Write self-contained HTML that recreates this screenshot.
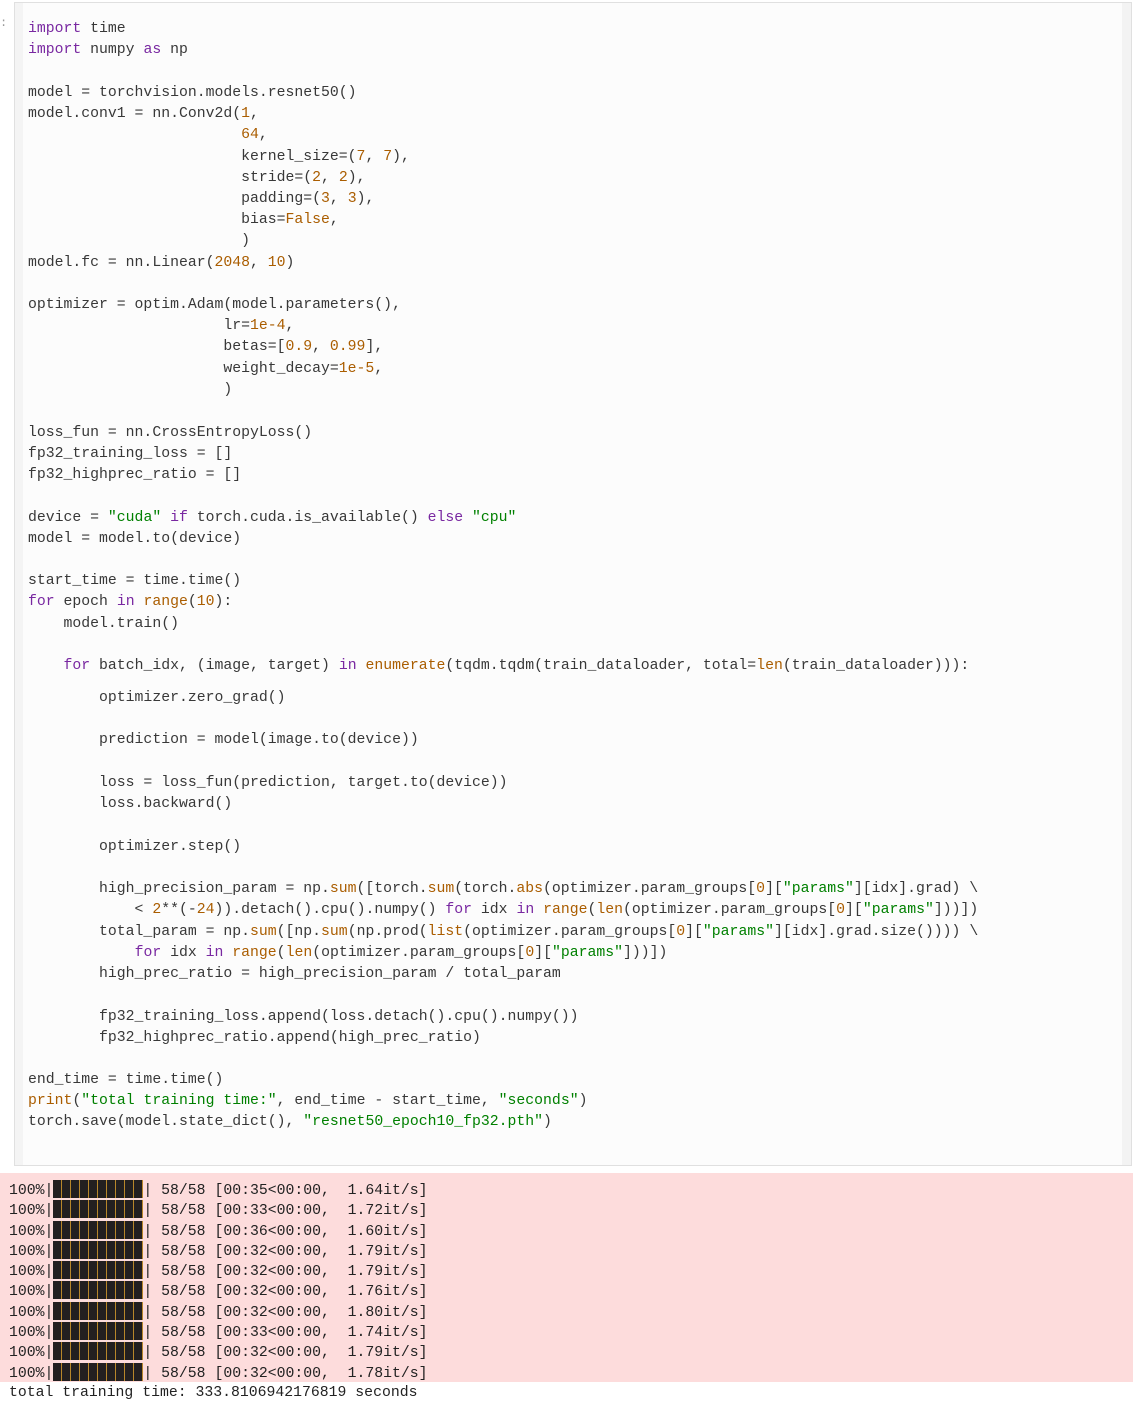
<!DOCTYPE html>
<html><head><meta charset="utf-8"><style>
body{margin:0;width:1133px;height:1410px;background:#fff;position:relative;overflow:hidden;font-family:"Liberation Mono",monospace;font-size:14.8px;color:#383838}
.cell{position:absolute;left:14px;top:2px;width:1116px;height:1162px;border:1px solid #e0e0e0;background:#fcfcfc}
.lb{position:absolute;left:0;top:0;width:8px;height:100%;background:#f4f4f4}
.rb{position:absolute;right:0;top:0;width:9px;height:100%;background:#f3f3f3}
.l{position:absolute;left:28px;white-space:pre;line-height:21px;height:21px;margin-top:2px}
.k{color:#7928a1}.n{color:#aa5d00}.s{color:#008000}
.out{position:absolute;left:0;top:1173px;width:1133px;height:209px;background:#fddcdc}
.o{position:absolute;left:9px;white-space:pre;line-height:20px;color:#222;margin-top:1px}
.bar{display:inline-block;width:90px;height:18px;vertical-align:-4px;background:#231f20 repeating-linear-gradient(90deg,transparent 0 8px,#b8862a 8px 9px);}
</style></head><body>
<div style="position:absolute;left:0;top:16px;color:#999;font-size:12px">:</div>
<div class="cell"><div class="lb"></div><div class="rb"></div></div>
<div class="l" style="top:17px"><span class="k">import</span> time</div>
<div class="l" style="top:38px"><span class="k">import</span> numpy <span class="k">as</span> np</div>
<div class="l" style="top:81px">model = torchvision.models.resnet50()</div>
<div class="l" style="top:102px">model.conv1 = nn.Conv2d(<span class="n">1</span>,</div>
<div class="l" style="top:123px">                        <span class="n">64</span>,</div>
<div class="l" style="top:145px">                        kernel_size=(<span class="n">7</span>, <span class="n">7</span>),</div>
<div class="l" style="top:166px">                        stride=(<span class="n">2</span>, <span class="n">2</span>),</div>
<div class="l" style="top:187px">                        padding=(<span class="n">3</span>, <span class="n">3</span>),</div>
<div class="l" style="top:208px">                        bias=<span class="n">False</span>,</div>
<div class="l" style="top:229px">                        )</div>
<div class="l" style="top:251px">model.fc = nn.Linear(<span class="n">2048</span>, <span class="n">10</span>)</div>
<div class="l" style="top:293px">optimizer = optim.Adam(model.parameters(),</div>
<div class="l" style="top:314px">                      lr=<span class="n">1e-4</span>,</div>
<div class="l" style="top:335px">                      betas=[<span class="n">0.9</span>, <span class="n">0.99</span>],</div>
<div class="l" style="top:357px">                      weight_decay=<span class="n">1e-5</span>,</div>
<div class="l" style="top:378px">                      )</div>
<div class="l" style="top:421px">loss_fun = nn.CrossEntropyLoss()</div>
<div class="l" style="top:442px">fp32_training_loss = []</div>
<div class="l" style="top:463px">fp32_highprec_ratio = []</div>
<div class="l" style="top:506px">device = <span class="s">"cuda"</span> <span class="k">if</span> torch.cuda.is_available() <span class="k">else</span> <span class="s">"cpu"</span></div>
<div class="l" style="top:527px">model = model.to(device)</div>
<div class="l" style="top:569px">start_time = time.time()</div>
<div class="l" style="top:590px"><span class="k">for</span> epoch <span class="k">in</span> <span class="n">range</span>(<span class="n">10</span>):</div>
<div class="l" style="top:612px">    model.train()</div>
<div class="l" style="top:654px">    <span class="k">for</span> batch_idx, (image, target) <span class="k">in</span> <span class="n">enumerate</span>(tqdm.tqdm(train_dataloader, total=<span class="n">len</span>(train_dataloader))):</div>
<div class="l" style="top:686px">        optimizer.zero_grad()</div>
<div class="l" style="top:728px">        prediction = model(image.to(device))</div>
<div class="l" style="top:771px">        loss = loss_fun(prediction, target.to(device))</div>
<div class="l" style="top:792px">        loss.backward()</div>
<div class="l" style="top:835px">        optimizer.step()</div>
<div class="l" style="top:877px">        high_precision_param = np.<span class="n">sum</span>([torch.<span class="n">sum</span>(torch.<span class="n">abs</span>(optimizer.param_groups[<span class="n">0</span>][<span class="s">"params"</span>][idx].grad) \</div>
<div class="l" style="top:898px">            &lt; <span class="n">2</span>**(-<span class="n">24</span>)).detach().cpu().numpy() <span class="k">for</span> idx <span class="k">in</span> <span class="n">range</span>(<span class="n">len</span>(optimizer.param_groups[<span class="n">0</span>][<span class="s">"params"</span>]))])</div>
<div class="l" style="top:920px">        total_param = np.<span class="n">sum</span>([np.<span class="n">sum</span>(np.prod(<span class="n">list</span>(optimizer.param_groups[<span class="n">0</span>][<span class="s">"params"</span>][idx].grad.size()))) \</div>
<div class="l" style="top:941px">            <span class="k">for</span> idx <span class="k">in</span> <span class="n">range</span>(<span class="n">len</span>(optimizer.param_groups[<span class="n">0</span>][<span class="s">"params"</span>]))])</div>
<div class="l" style="top:962px">        high_prec_ratio = high_precision_param / total_param</div>
<div class="l" style="top:1005px">        fp32_training_loss.append(loss.detach().cpu().numpy())</div>
<div class="l" style="top:1026px">        fp32_highprec_ratio.append(high_prec_ratio)</div>
<div class="l" style="top:1068px">end_time = time.time()</div>
<div class="l" style="top:1089px"><span class="n">print</span>(<span class="s">"total training time:"</span>, end_time - start_time, <span class="s">"seconds"</span>)</div>
<div class="l" style="top:1110px">torch.save(model.state_dict(), <span class="s">"resnet50_epoch10_fp32.pth"</span>)</div>
<div class="out"></div>
<div class="o" style="top:1179px">100%|<span class="bar"></span>| 58/58 [00:35&lt;00:00,  1.64it/s]</div>
<div class="o" style="top:1199px">100%|<span class="bar"></span>| 58/58 [00:33&lt;00:00,  1.72it/s]</div>
<div class="o" style="top:1220px">100%|<span class="bar"></span>| 58/58 [00:36&lt;00:00,  1.60it/s]</div>
<div class="o" style="top:1240px">100%|<span class="bar"></span>| 58/58 [00:32&lt;00:00,  1.79it/s]</div>
<div class="o" style="top:1260px">100%|<span class="bar"></span>| 58/58 [00:32&lt;00:00,  1.79it/s]</div>
<div class="o" style="top:1280px">100%|<span class="bar"></span>| 58/58 [00:32&lt;00:00,  1.76it/s]</div>
<div class="o" style="top:1301px">100%|<span class="bar"></span>| 58/58 [00:32&lt;00:00,  1.80it/s]</div>
<div class="o" style="top:1321px">100%|<span class="bar"></span>| 58/58 [00:33&lt;00:00,  1.74it/s]</div>
<div class="o" style="top:1341px">100%|<span class="bar"></span>| 58/58 [00:32&lt;00:00,  1.79it/s]</div>
<div class="o" style="top:1362px">100%|<span class="bar"></span>| 58/58 [00:32&lt;00:00,  1.78it/s]</div>
<div class="o" style="top:1382px">total training time: 333.8106942176819 seconds</div>
</body></html>
